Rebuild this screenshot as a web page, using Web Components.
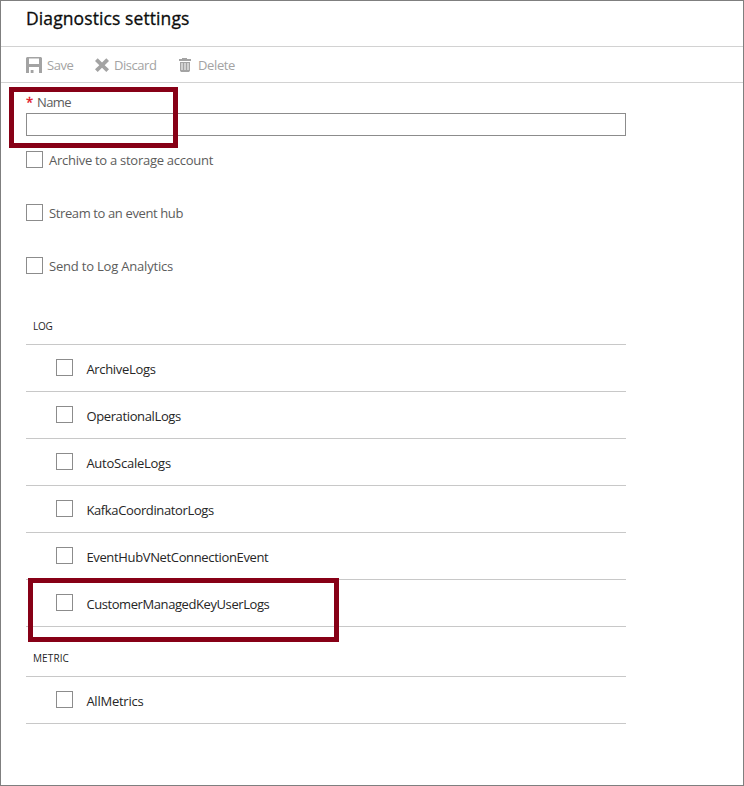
<!DOCTYPE html>
<html lang="en"><head><meta charset="utf-8"><title>Diagnostics settings</title>
<style>
html,body{margin:0;height:100%;background:#fff;overflow:hidden}
body{font:13px/20px "Open Sans","Noto Sans",sans-serif;color:#5c5c5c}
</style></head><body>
<settings-blade></settings-blade>
<script>
const define = (name, html, setup) => {
  const t = document.createElement('template');
  t.innerHTML = html;
  customElements.define(name, class extends HTMLElement {
    connectedCallback() {
      if (this.shadowRoot) return;
      this.attachShadow({mode: 'open'}).append(t.content.cloneNode(true));
      if (setup) setup(this, this.shadowRoot);
    }
  });
};

/* Text label whose tracking is adjusted to occupy the width given in "w". */
define('fit-text', `<style>:host{display:inline-block;white-space:nowrap;flex:none}span{display:inline-block}</style><span><slot></slot></span>`,
  (el, root) => {
    const s = root.querySelector('span');
    const w = +el.getAttribute('w'), n = el.textContent.length;
    const extra = (w - s.getBoundingClientRect().width) / n;
    s.style.letterSpacing = extra.toFixed(3) + 'px';
  });

define('check-box', `<style>:host{display:block;flex:none;box-sizing:border-box;width:17px;height:17px;border:1px solid #8c8c8c;background:#fff}</style>`);

define('tool-button', `<style>:host{display:flex;height:20px;color:#a3a3a3}.i{height:20px;flex:none}::slotted(svg){display:block;margin-top:-1px}</style><span class="i"><slot name="icon"></slot></span><slot></slot>`);

define('option-row', `<style>:host{display:flex;height:17px;gap:6px;margin-bottom:36px}</style><check-box></check-box><slot></slot>`);

define('log-row', `<style>:host{display:flex;box-sizing:border-box;height:47px;padding:14px 0 0 30px;gap:13.4px;border-bottom:1px solid #c8c8c8;color:#262626}</style><check-box></check-box><slot></slot>`);

define('group-head', `<style>:host{display:flex;align-items:flex-end;box-sizing:border-box;height:50px;padding:0 0 8px 7px;border-bottom:1px solid #c8c8c8;font-size:10px;color:#262626}</style><slot></slot>`);

define('call-out', `<style>:host{position:absolute;box-sizing:border-box;border:5px solid #870016;pointer-events:none}</style>`);

define('settings-blade', `<style>
:host{display:block;position:relative;box-sizing:border-box;width:744px;height:786px;border:1px solid #7f7f7f;background:#fff}
header{box-sizing:border-box;height:46px;padding:4px 25px 0;border-bottom:1px solid #d2d2d2;font-size:17.5px;line-height:26px;color:#0c0c0c}
header fit-text{-webkit-text-stroke:.3px}
nav{display:flex;box-sizing:border-box;height:36px;padding:8px 0 0 25px;border-bottom:1px solid #d2d2d2}
main{width:600px;margin-left:25px}
.label{display:flex;height:20px;padding-top:9px}
.star{color:#e20b19;width:11px;-webkit-text-stroke:.3px}
input{display:block;box-sizing:border-box;width:600px;height:23px;margin:1px 0 15px;border:1px solid #8c8c8c;border-radius:0;padding:0 6px;outline:0;background:#fff}
option-row fit-text{margin-top:-1px}
.log{margin-top:-15px}
.one{left:8px;top:86px;width:169px;height:61px}
.two{left:27px;top:577px;width:311px;height:64px}
svg{fill:#a3a3a3}
</style>
<header><fit-text w="163.5">Diagnostics settings</fit-text></header>
<nav>
<tool-button style="width:68px"><svg slot="icon" width="21" height="20" viewBox="0 0 21 20"><path fill-rule="evenodd" d="M1 3H15L16 4V19H0V4ZM3 4.5V10H13V4.5ZM3 13V19H4.7V16H7.5V19H13V13Z"/></svg><fit-text w="26.5">Save</fit-text></tool-button>
<tool-button style="width:84px"><svg slot="icon" width="20" height="20" viewBox="0 0 20 20"><path d="M3.7 4.2L8 8.5L12.3 4.2L15 6.9L10.7 11.2L15 15.3L12.3 18L8 13.8L3.7 18L1 15.3L5.3 11.2L1 6.9Z"/></svg><fit-text w="42.5">Discard</fit-text></tool-button>
<tool-button><svg slot="icon" width="20" height="20" viewBox="0 0 20 20"><path fill-rule="evenodd" d="M4 4H9V5H13V7H1V5H4ZM2 8H12V16.8L11 18H3L2 16.8ZM3.5 9V16H4.5V9ZM6.5 9V16H7.5V9ZM9.5 9V16H10.5V9Z"/></svg><fit-text w="37">Delete</fit-text></tool-button>
</nav>
<main>
<div class="label"><span class="star">*</span><fit-text w="34">Name</fit-text></div>
<input aria-label="Name">
<option-row><fit-text w="164">Archive to a storage account</fit-text></option-row>
<option-row><fit-text w="134">Stream to an event hub</fit-text></option-row>
<option-row><fit-text w="124">Send to Log Analytics</fit-text></option-row>
<group-head class="log"><fit-text w="19.5">LOG</fit-text></group-head>
<log-row><fit-text w="69.2">ArchiveLogs</fit-text></log-row>
<log-row><fit-text w="94.5">OperationalLogs</fit-text></log-row>
<log-row><fit-text w="84.5">AutoScaleLogs</fit-text></log-row>
<log-row><fit-text w="127.5">KafkaCoordinatorLogs</fit-text></log-row>
<log-row><fit-text w="182">EventHubVNetConnectionEvent</fit-text></log-row>
<log-row><fit-text w="183">CustomerManagedKeyUserLogs</fit-text></log-row>
<group-head><fit-text w="36">METRIC</fit-text></group-head>
<log-row><fit-text w="57">AllMetrics</fit-text></log-row>
</main>
<call-out class="one"></call-out><call-out class="two"></call-out>`);
</script>
</body></html>
